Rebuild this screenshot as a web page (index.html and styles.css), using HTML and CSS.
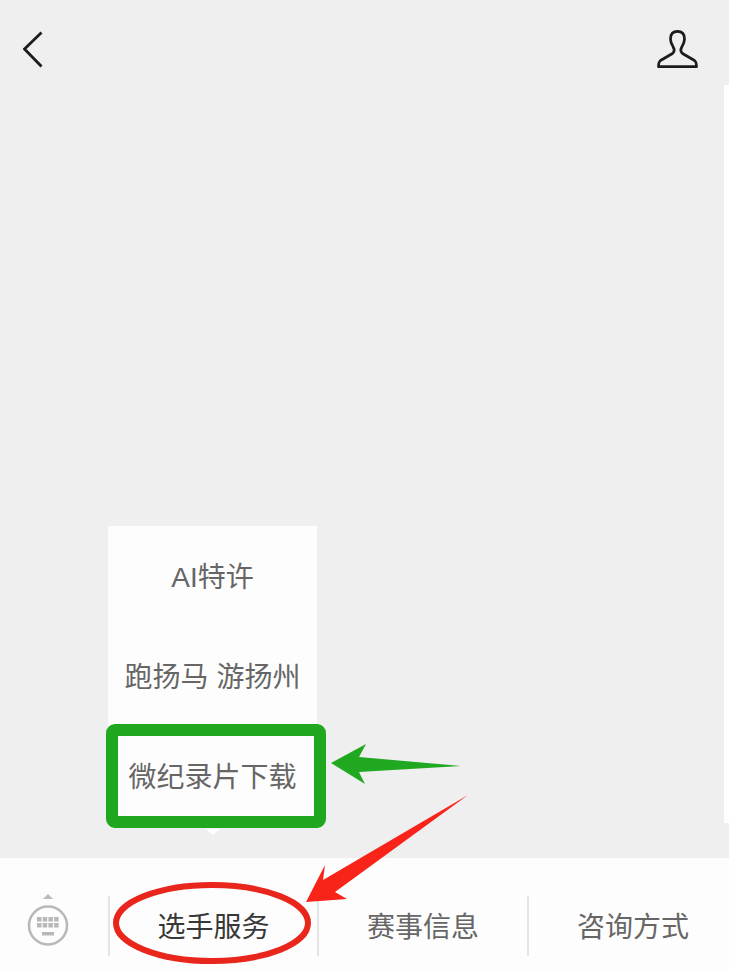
FILE: index.html
```html
<!DOCTYPE html>
<html lang="zh-CN">
<head>
<meta charset="utf-8">
<title>选手服务</title>
<link rel="stylesheet" href="styles.css">
</head>
<body>
<div class="page">
  <header class="topbar">
    <svg class="icon-back" width="20" height="37" viewBox="0 0 20 37"><path d="M18.500 1.500 1.500 18 18.500 35.500" fill="none" stroke="#1c1c1c" stroke-width="2.800"/></svg>
    <svg class="icon-user" width="41" height="39" viewBox="0 0 41 39"><path d="M20.500 1.400C15.500 1.400 13.500 4.500 13.500 9C13.500 12.500 14.800 14.500 16.200 17C17.600 19.500 17.800 21.500 15.500 23.500L3.500 30.500C1.800 31.700 1.500 34 1.500 36.700L39.500 36.700C39.500 34 39.200 31.700 37.500 30.500L25.500 23.500C23.200 21.500 23.400 19.500 24.800 17C26.200 14.500 27.500 12.500 27.500 9C27.500 4.500 25.500 1.400 20.500 1.400Z" fill="none" stroke="#1c1c1c" stroke-width="2.700" stroke-linejoin="round"/></svg>
  </header>
  <main class="content"></main>
  <div class="edge"></div>
  <div class="submenu">
    <div class="submenu-item">AI特许</div>
    <div class="submenu-item">跑扬马 游扬州</div>
    <div class="submenu-item">微纪录片下载</div>
    <div class="submenu-tail"></div>
  </div>
  <footer class="menubar">
    <div class="kbd-cell">
      <svg width="42" height="60" viewBox="0 0 42 60">
        <path d="M21 0 26 5H16Z" fill="#bbb"/>
        <circle cx="21" cy="31.500" r="19" fill="none" stroke="#b8b8b8" stroke-width="2.500"/>
        <g fill="#b8b8b8">
          <rect x="10" y="23" width="4.500" height="4.500"/><rect x="15.700" y="23" width="4.500" height="4.500"/><rect x="21.400" y="23" width="4.500" height="4.500"/><rect x="27.100" y="23" width="4.500" height="4.500"/>
          <rect x="10" y="29" width="4.500" height="4.500"/><rect x="15.700" y="29" width="4.500" height="4.500"/><rect x="21.400" y="29" width="4.500" height="4.500"/><rect x="27.100" y="29" width="4.500" height="4.500"/>
          <rect x="15" y="38" width="12" height="3.500"/>
        </g>
      </svg>
    </div>
    <div class="menu-cell active">选手服务</div>
    <div class="menu-cell">赛事信息</div>
    <div class="menu-cell last">咨询方式</div>
  </footer>
  <svg class="marks" width="729" height="973" viewBox="0 0 729 973">
    <rect x="112" y="730" width="208" height="92" rx="3" fill="none" stroke="#1fa81f" stroke-width="12"/>
    <path d="M331 763 366 744 359 757 461 766 359 772 365 784Z" fill="#20a820"/>
    <ellipse cx="212" cy="923" rx="96" ry="38" fill="none" stroke="#e8261c" stroke-width="6"/>
    <path d="M468 795 323 880 325 865 306 902 347 899 335 892Z" fill="#f8241a"/>
  </svg>
</div>
</body>
</html>
```
FILE: styles.css
```css
* { box-sizing: border-box; }
html, body { margin: 0; padding: 0; }
body { font-family: "Liberation Sans", "Noto Sans CJK SC", sans-serif; }
.page {
  position: relative;
  width: 729px;
  height: 973px;
  overflow: hidden;
  display: flex;
  flex-direction: column;
  background: #efefef;
}
.topbar {
  display: flex;
  justify-content: space-between;
  align-items: flex-start;
  padding: 31px 31px 0 23px;
  height: 85px;
}
.icon-user { margin-top: -1px; }
.content { flex: 1; }
.edge {
  position: absolute;
  top: 85px;
  right: 0;
  width: 5px;
  height: 738px;
  background: #fff;
}
.submenu {
  position: absolute;
  left: 108px;
  top: 526px;
  width: 209px;
  background: #fdfdfd;
}
.submenu-item {
  height: 100px;
  display: flex;
  align-items: center;
  justify-content: center;
  padding-bottom: 2px;
  font-size: 28px;
  color: #666;
  white-space: nowrap;
}
.submenu-tail {
  position: absolute;
  left: 98px;
  top: 303px;
  border-left: 7px solid transparent;
  border-right: 7px solid transparent;
  border-top: 6px solid #fff;
}
.menubar {
  height: 115px;
  background: #fdfdfd;
  display: grid;
  grid-template-columns: 108px 209px 210px 1fr;
  padding: 38px 0 17px;
}
.kbd-cell {
  display: flex;
  justify-content: flex-start;
  padding-left: 27px;
  margin-top: -2px;
}
.menu-cell {
  display: flex;
  align-items: center;
  justify-content: center;
  border-left: 2px solid #e4e4e4;
  padding-bottom: 2px;
  font-size: 28px;
  color: #666;
}
.menu-cell.active { color: #383838; }
.menu-cell.last { padding-left: 8px; }
.marks {
  position: absolute;
  left: 0;
  top: 0;
  pointer-events: none;
}
```
